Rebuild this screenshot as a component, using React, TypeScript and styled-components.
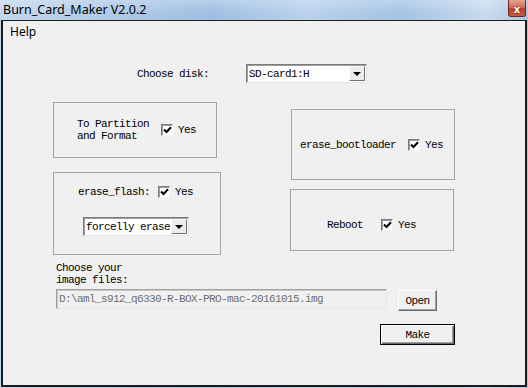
import React from 'react';
import styled, { createGlobalStyle } from 'styled-components';

const Global = createGlobalStyle`
  html, body { margin: 0; padding: 0; width: 528px; height: 388px; overflow: hidden; background: #b4cde8; }
  * { box-sizing: border-box; }
`;

const mono = `"Liberation Mono", "DejaVu Sans Mono", monospace`;
const ui = `"Noto Sans", "Open Sans", sans-serif`;

const Window = styled.div`
  width: 528px;
  height: 388px;
  display: flex;
  flex-direction: column;
  background: linear-gradient(90deg, #c3d7ec 0%, #b2cbe7 18%, #9ebfe2 40%, #b9d1ea 58%, #a4c3e4 76%, #c9dbee 92%, #a9c6e5 100%);
`;

const TitleBar = styled.div`
  height: 20px;
  display: flex;
  align-items: flex-start;
  justify-content: space-between;
  padding: 0 2px 0 3px;
  background: linear-gradient(180deg, rgba(255,255,255,0.25), rgba(255,255,255,0) 70%);
`;

const Title = styled.span`
  font-family: ${ui};
  font-size: 12.5px;
  line-height: 19px;
  color: #000;
`;

const CloseButton = styled.div`
  width: 18px;
  height: 17px;
  display: flex;
  align-items: center;
  justify-content: center;
  border: 1px solid #6e2a1d;
  border-top: none;
  border-radius: 0 0 3px 3px;
  background: linear-gradient(180deg, #e4a391 0%, #d2725c 45%, #b9412b 55%, #c95a40 100%);
  color: #fff;
  font-family: ${ui};
  font-weight: 700;
  font-size: 11px;
  line-height: 1;
  text-shadow: 0 0 2px #5a1a0e;
`;

const Client = styled.div`
  flex: 1;
  margin: 0 1px 1px 1px;
  border: 2px solid #1b1b1b;
  border-top-width: 1px;
  background: #f0f0f0;
  display: flex;
  flex-direction: column;
`;

const MenuBar = styled.div`
  height: 20px;
  display: flex;
  align-items: center;
  padding-left: 7px;
  font-family: ${ui};
  font-size: 12px;
  color: #000;
`;

const Text = styled.span<{ $gray?: boolean }>`
  font-family: ${mono};
  font-size: 11px;
  line-height: 12px;
  letter-spacing: -0.6px;
  color: ${(p) => (p.$gray ? '#6f6f6f' : '#000')};
  white-space: pre;
`;

const DiskRow = styled.div`
  margin-top: 23px;
  padding-left: 134px;
  height: 19px;
  display: flex;
  align-items: center;
`;

const Combo = styled.div<{ $w: number; $ml: number; $mt?: number }>`
  width: ${(p) => p.$w}px;
  height: 19px;
  margin-left: ${(p) => p.$ml}px;
  margin-top: ${(p) => p.$mt ?? 0}px;
  display: flex;
  align-items: center;
  justify-content: space-between;
  background: #fff;
  border: 1px solid;
  border-color: #7a7a7a #e4e4e4 #e4e4e4 #7a7a7a;
  box-shadow: inset 1px 1px 0 #a0a0a0;
  padding: 1px 1px 1px 2px;
`;

const DropButton = styled.div`
  width: 16px;
  height: 100%;
  display: flex;
  align-items: center;
  justify-content: center;
  background: #ececec;
  border: 1px solid;
  border-color: #fdfdfd #707070 #707070 #fdfdfd;
  &::after {
    content: '';
    border-left: 4px solid transparent;
    border-right: 4px solid transparent;
    border-top: 4px solid #000;
    margin-top: 1px;
  }
`;

const BoxesArea = styled.div`
  display: flex;
  align-items: flex-start;
`;

const Column = styled.div<{ $ml: number; $mt: number; $gap: number }>`
  display: flex;
  flex-direction: column;
  margin-left: ${(p) => p.$ml}px;
  margin-top: ${(p) => p.$mt}px;
  gap: ${(p) => p.$gap}px;
`;

const GroupBox = styled.div<{ $w: number; $h: number; $pl?: number; $pt?: number; $ml?: number }>`
  width: ${(p) => p.$w}px;
  height: ${(p) => p.$h}px;
  margin-left: ${(p) => p.$ml ?? 0}px;
  border: 1px solid #a4a4a4;
  display: flex;
  flex-direction: column;
  justify-content: ${(p) => (p.$pt !== undefined ? 'flex-start' : 'center')};
  padding-left: ${(p) => p.$pl ?? 0}px;
  padding-top: ${(p) => p.$pt ?? 0}px;
`;

const FlagRow = styled.div<{ $ml?: number }>`
  display: flex;
  align-items: center;
  margin-left: ${(p) => p.$ml ?? 0}px;
`;

const Label = styled.div`
  display: flex;
  flex-direction: column;
`;

const CheckBox = styled.span<{ $ml: number }>`
  width: 12px;
  height: 12px;
  margin-left: ${(p) => p.$ml}px;
  margin-right: 5px;
  display: inline-flex;
  align-items: center;
  justify-content: center;
  background: #fff;
  border: 1px solid;
  border-color: #7c7c7c #f4f4f4 #f4f4f4 #7c7c7c;
  box-shadow: inset 1px 1px 0 #9c9c9c;
`;

const Check = () => (
  <svg width="9" height="8" viewBox="0 0 9 8">
    <path d="M1 3.5 L3.5 6 L8 1.2" fill="none" stroke="#000" strokeWidth="2" />
  </svg>
);

const Flag: React.FC<{ label: React.ReactNode; gap: number; ml?: number }> = ({ label, gap, ml }) => (
  <FlagRow $ml={ml}>
    {label}
    <CheckBox $ml={gap}>
      <Check />
    </CheckBox>
    <Text>Yes</Text>
  </FlagRow>
);

const FileSection = styled.div`
  display: flex;
  flex-direction: column;
  margin-left: 53px;
  margin-top: 7px;
`;

const InputRow = styled.div`
  display: flex;
  align-items: flex-start;
  margin-top: 3px;
`;

const PathInput = styled.div`
  width: 331px;
  height: 20px;
  display: flex;
  align-items: center;
  padding-left: 2px;
  background: #f0f0f0;
  border: 1px solid;
  border-color: #a0a0a0 #e6e6e6 #e6e6e6 #a0a0a0;
  box-shadow: inset 1px 1px 0 #c8c8c8;
`;

const Button = styled.div<{ $w: number; $ml: number; $mt: number; $default?: boolean }>`
  width: ${(p) => p.$w}px;
  height: 21px;
  margin-left: ${(p) => p.$ml}px;
  margin-top: ${(p) => p.$mt}px;
  display: flex;
  align-items: center;
  justify-content: center;
  background: #f0f0f0;
  border: 1px solid;
  border-color: ${(p) => (p.$default ? '#000' : '#ffffff #6a6a6a #6a6a6a #ffffff')};
  box-shadow: ${(p) =>
    p.$default
      ? 'inset 1px 1px 0 #fff, inset -1px -1px 0 #6a6a6a, inset -2px -2px 0 #a0a0a0'
      : 'inset -1px -1px 0 #a0a0a0'};
`;

export default function App() {
  return (
    <>
      <Global />
      <Window>
        <TitleBar>
          <Title>Burn_Card_Maker V2.0.2</Title>
          <CloseButton>x</CloseButton>
        </TitleBar>
        <Client>
          <MenuBar>Help</MenuBar>
          <DiskRow>
            <Text>Choose disk:</Text>
            <Combo $w={121} $ml={37}>
              <Text>SD-card1:H</Text>
              <DropButton />
            </Combo>
          </DiskRow>
          <BoxesArea>
            <Column $ml={50} $mt={19} $gap={14}>
              <GroupBox $w={164} $h={56} $pl={23}>
                <Flag
                  gap={12}
                  label={
                    <Label>
                      <Text>To Partition</Text>
                      <Text>and Format</Text>
                    </Label>
                  }
                />
              </GroupBox>
              <GroupBox $w={168} $h={83} $pt={13}>
                <Flag ml={24} gap={8} label={<Text>erase_flash:</Text>} />
                <Combo $w={106} $ml={29} $mt={19}>
                  <Text>forcelly erase</Text>
                  <DropButton />
                </Combo>
              </GroupBox>
            </Column>
            <Column $ml={69} $mt={26} $gap={9}>
              <GroupBox $w={164} $h={71} $pl={8} $ml={1}>
                <Flag gap={12} label={<Text>erase_bootloader</Text>} />
              </GroupBox>
              <GroupBox $w={164} $h={62} $pl={36} $pt={29}>
                <Flag gap={18} label={<Text>Reboot</Text>} />
              </GroupBox>
            </Column>
          </BoxesArea>
          <FileSection>
            <Text>Choose your</Text>
            <Text>image files:</Text>
            <InputRow>
              <PathInput>
                <Text $gray>D:\aml_s912_q6330-R-BOX-PRO-mac-20161015.img</Text>
              </PathInput>
              <Button $w={39} $ml={11} $mt={1}>
                <Text>Open</Text>
              </Button>
            </InputRow>
            <Button $w={75} $ml={324} $mt={13} $default>
              <Text>Make</Text>
            </Button>
          </FileSection>
        </Client>
      </Window>
    </>
  );
}
